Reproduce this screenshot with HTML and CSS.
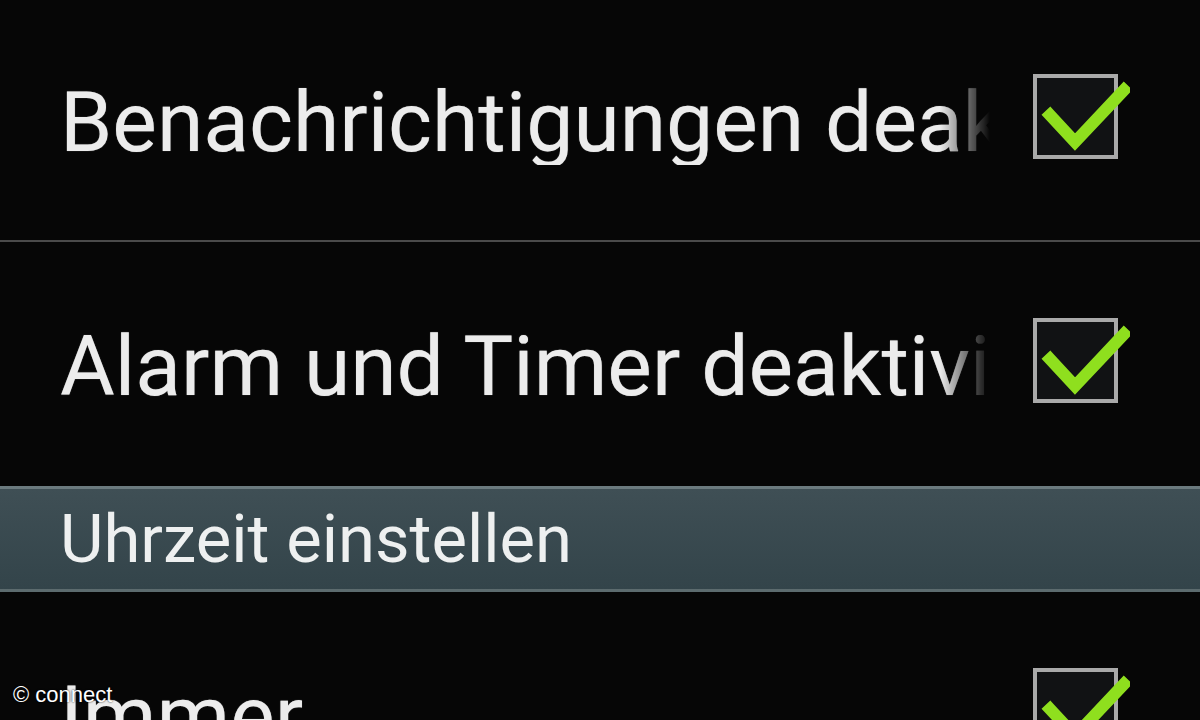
FILE: index.html
```html
<!DOCTYPE html>
<html lang="de">
<head>
<meta charset="utf-8">
<title>Einstellungen</title>
<link rel="stylesheet" href="styles.css">
</head>
<body>
<div class="screen">
  <div class="row">
    <div class="label">Benachrichtigungen deaktivieren</div>
    <div class="check">
      <svg viewBox="0 0 100 100" width="100" height="100" aria-hidden="true">
        <rect x="5" y="6" width="81" height="81" class="box"/>
        <polyline points="20,45 45,72 94,20" class="tick"/>
      </svg>
    </div>
  </div>
  <div class="divider"></div>
  <div class="row row2">
    <div class="label">Alarm und Timer deaktivieren</div>
    <div class="check">
      <svg viewBox="0 0 100 100" width="100" height="100" aria-hidden="true">
        <rect x="5" y="6" width="81" height="81" class="box"/>
        <polyline points="20,45 45,72 94,20" class="tick"/>
      </svg>
    </div>
  </div>
  <div class="header">Uhrzeit einstellen</div>
  <div class="row row3">
    <div class="label">Immer</div>
    <div class="check">
      <svg viewBox="0 0 100 100" width="100" height="100" aria-hidden="true">
        <rect x="5" y="6" width="81" height="81" class="box"/>
        <polyline points="20,45 45,72 94,20" class="tick"/>
      </svg>
    </div>
  </div>
  <div class="copyright">© connect</div>
</div>
</body>
</html>
```
FILE: styles.css
```css
html, body {
  margin: 0;
  padding: 0;
  background: #050505;
}
.screen {
  position: relative;
  width: 1200px;
  height: 720px;
  overflow: hidden;
  background: #060606;
  font-family: Roboto, "Noto Sans", sans-serif;
  color: #ececec;
}
.row {
  display: flex;
  align-items: center;
  height: 240px;
  padding-left: 60px;
  box-sizing: border-box;
}
.row2 {
  height: 244px;
}
.row3 {
  height: 240px;
  padding-top: 4px;
}
.label {
  flex: 1;
  min-width: 0;
  font-size: 84px;
  line-height: 1;
  white-space: nowrap;
  overflow: hidden;
  padding-top: 6px;
  text-shadow: 0 0 1px rgba(255, 255, 255, 0.5);
  -webkit-mask-image: linear-gradient(to right, #000 0, #000 calc(100% - 50px), transparent 100%);
  mask-image: linear-gradient(to right, #000 0, #000 calc(100% - 50px), transparent 100%);
}
.check {
  width: 100px;
  height: 100px;
  margin-left: 40px;
  margin-right: 70px;
  flex: none;
}
.check svg {
  display: block;
}
.box {
  fill: #111214;
  stroke: #a9a9a9;
  stroke-width: 4;
}
.tick {
  fill: none;
  stroke: #8fdf1e;
  stroke-width: 12;
  stroke-linecap: square;
  stroke-linejoin: miter;
}
.divider {
  height: 2px;
  background: #4a4a4a;
}
.header {
  height: 100px;
  display: flex;
  align-items: center;
  padding-left: 60px;
  box-sizing: content-box;
  border-top: 3px solid #6b7a7e;
  border-bottom: 3px solid #5c6b6e;
  background: linear-gradient(#3f4f55, #33444a);
  font-size: 67px;
  color: #eef0f0;
}
.copyright {
  position: absolute;
  left: 13px;
  top: 682px;
  font-family: "Liberation Sans", Arial, sans-serif;
  font-size: 22px;
  color: #ffffff;
  text-shadow: 0 0 2px #000;
}
```
